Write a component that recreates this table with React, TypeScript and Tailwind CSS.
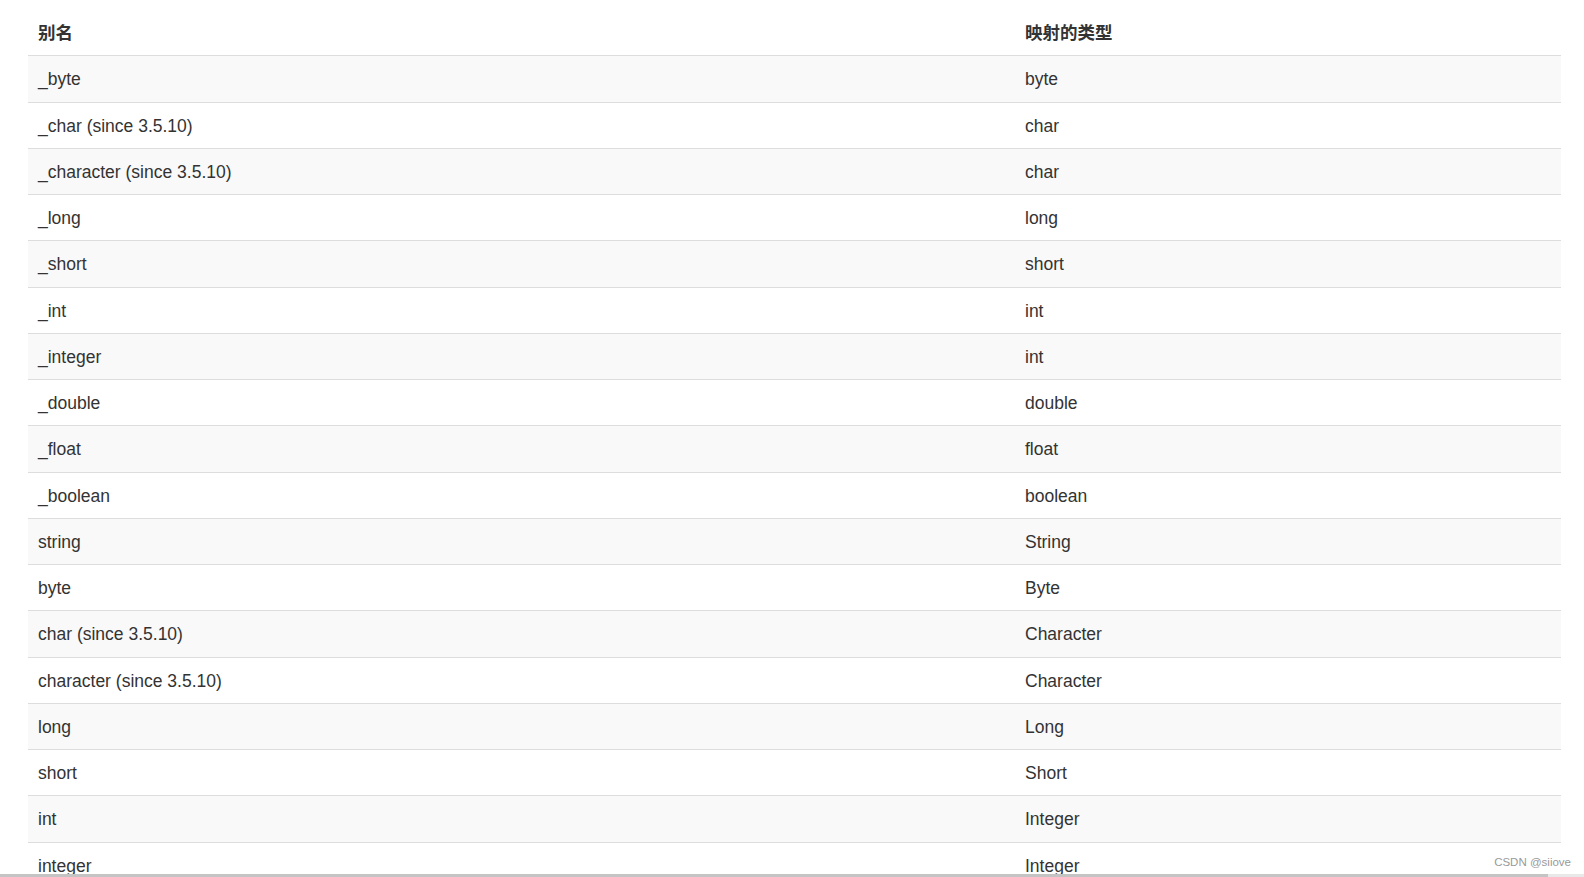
const rows: [string, string][] = [
  ["_byte", "byte"],
  ["_char (since 3.5.10)", "char"],
  ["_character (since 3.5.10)", "char"],
  ["_long", "long"],
  ["_short", "short"],
  ["_int", "int"],
  ["_integer", "int"],
  ["_double", "double"],
  ["_float", "float"],
  ["_boolean", "boolean"],
  ["string", "String"],
  ["byte", "Byte"],
  ["char (since 3.5.10)", "Character"],
  ["character (since 3.5.10)", "Character"],
  ["long", "Long"],
  ["short", "Short"],
  ["int", "Integer"],
  ["integer", "Integer"],
];

function App() {
  return (
    <div className="relative h-[877px] w-[1584px] overflow-hidden bg-white font-['Liberation_Sans','Noto_Sans_CJK_SC',sans-serif] text-[17.5px] text-[#333]">
      <div className="ml-[28px] mt-[10px] w-[1533px]">
        <div className="flex h-[46.25px] items-center border-b border-[#dddddd] font-bold">
          <div className="w-[987px] px-[10px]">别名</div>
          <div className="flex-1 px-[10px]">映射的类型</div>
        </div>
        {rows.map(([alias, type], i) => (
          <div
            key={alias}
            className={`flex h-[46.25px] items-center border-b-[1.5px] border-[#dddddd] pt-[1px] ${i % 2 === 0 ? "bg-[#f9f9f9]" : "bg-white"}`}
          >
            <div className="w-[987px] px-[10px]">{alias}</div>
            <div className="flex-1 px-[10px]">{type}</div>
          </div>
        ))}
      </div>

      <div className="absolute bottom-[6px] right-[13px] font-['Liberation_Sans',sans-serif] text-[11.5px] text-[#999]">
        CSDN @siiove
      </div>
      <div className="absolute bottom-0 left-0 flex h-[3px] w-full bg-[#e8e8e8]">
        <div className="h-full w-[1548px] bg-[#c4c4c4]" />
      </div>
    </div>
  );
}

export default App;
